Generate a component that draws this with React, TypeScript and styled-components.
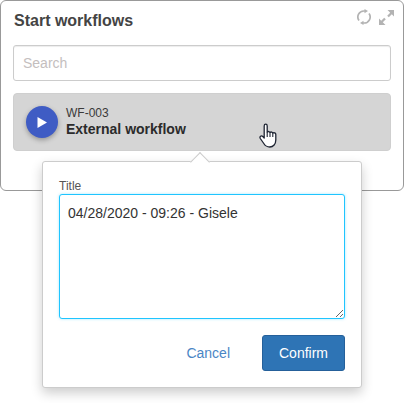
import React from "react";
import styled, { createGlobalStyle } from "styled-components";

const Global = createGlobalStyle`
  html, body { margin: 0; padding: 0; background: #fff; }
  body { font-family: "Liberation Sans", Arial, sans-serif; color: #333; }
  * { box-sizing: border-box; }
`;

const Page = styled.div`
  position: relative;
  width: 404px;
  height: 403px;
  overflow: hidden;
`;

const Card = styled.section`
  width: 404px;
  height: 191px;
  border: 1px solid #999;
  border-radius: 6px;
  padding: 10px 12px 0;
`;

const Header = styled.header`
  display: flex;
  align-items: center;
  justify-content: space-between;
  height: 20px;
  margin-bottom: 14px;
`;

const Title = styled.h2`
  margin: 0 0 0 1px;
  font-size: 16px;
  line-height: 20px;
  font-weight: 700;
  color: #444;
`;

const Tools = styled.div`
  display: flex;
  align-items: center;
  gap: 8px;
  margin: -8px -3px 0 0;
  color: #b3b3b3;
`;

const Search = styled.input`
  display: block;
  width: 378px;
  height: 36px;
  padding: 0 9px;
  border: 1px solid #ccc;
  border-radius: 3px;
  box-shadow: inset 0 1px 1px rgba(0, 0, 0, 0.075);
  font: 14px "Liberation Sans", Arial, sans-serif;
  outline: none;
  &::placeholder { color: #c4bebe; opacity: 1; }
`;

const Row = styled.div`
  display: flex;
  align-items: center;
  gap: 8px;
  width: 378px;
  height: 58px;
  margin-top: 12px;
  padding-left: 12px;
  background: #d5d5d5;
  border: 1px solid #cfcfcf;
  border-radius: 4px;
`;

const PlayButton = styled.span`
  display: flex;
  align-items: center;
  justify-content: center;
  width: 32px;
  height: 32px;
  flex: none;
  border-radius: 50%;
  background: #3f5cc4;
  box-shadow: 0 2px 5px rgba(0, 0, 0, 0.3);
`;

const RowText = styled.div`
  display: flex;
  flex-direction: column;
`;

const Code = styled.span`
  font-size: 12px;
  line-height: 15px;
  color: #3a3a3a;
`;

const Name = styled.span`
  font-size: 14px;
  line-height: 17px;
  font-weight: 700;
  color: #2b2b2b;
`;

const Cursor = styled.svg`
  position: absolute;
  left: 259px;
  top: 123px;
`;

const Popover = styled.div`
  position: absolute;
  left: 42px;
  top: 161px;
  width: 320px;
  height: 227px;
  padding: 17px 16px 0;
  background: #fff;
  border: 1px solid #ccc;
  border-radius: 3px;
  box-shadow: 0 5px 12px rgba(0, 0, 0, 0.2);
  &::before {
    content: "";
    position: absolute;
    left: 150px;
    top: -7px;
    width: 13px;
    height: 13px;
    background: #fff;
    border-left: 1px solid #ccc;
    border-top: 1px solid #ccc;
    transform: rotate(45deg);
  }
`;

const Label = styled.label`
  display: block;
  font-size: 12px;
  line-height: 14px;
  color: #555;
  margin-bottom: 1px;
`;

const TextArea = styled.textarea`
  display: block;
  width: 286px;
  height: 125px;
  padding: 10px 8px;
  border: 1px solid #1fc5ff;
  border-radius: 3px;
  box-shadow: 0 0 3px rgba(31, 197, 255, 0.4);
  font: 14px/17px "Liberation Sans", Arial, sans-serif;
  color: #333;
  outline: none;
`;

const Actions = styled.div`
  display: flex;
  align-items: center;
  justify-content: flex-end;
  gap: 32px;
  width: 286px;
  margin-top: 16px;
`;

const CancelLink = styled.a`
  font-size: 14px;
  color: #4a86c5;
  cursor: pointer;
`;

const ConfirmButton = styled.button`
  width: 83px;
  height: 36px;
  padding: 0;
  background: #2e74b5;
  border: 1px solid #25609a;
  border-radius: 3px;
  color: #fff;
  font: 14px "Liberation Sans", Arial, sans-serif;
`;

export default function App() {
  return (
    <Page>
      <Global />
      <Card>
        <Header>
          <Title>Start workflows</Title>
          <Tools>
            <svg width="14" height="16" viewBox="0 0 14 16" fill="none" stroke="currentColor" strokeWidth="1.7">
              <path d="M2 11.500A6 6 0 0 1 7 2h1" />
              <path d="M12 4.500A6 6 0 0 1 7 14H6" />
              <path d="M7.500 0l3.500 2-3.500 2.200z" fill="currentColor" stroke="none" />
              <path d="M6.500 11.800L3 14l3.500 2z" fill="currentColor" stroke="none" />
            </svg>
            <svg width="15" height="15" viewBox="0 0 15 15" fill="currentColor">
              <path d="M8.500 0H15v6.500l-2.200-2.200-3 3-1.600-1.600 3-3zM6.500 15H0V8.500l2.200 2.200 3-3 1.600 1.600-3 3z" />
            </svg>
          </Tools>
        </Header>
        <Search placeholder="Search" />
        <Row>
          <PlayButton>
            <svg width="10" height="11" viewBox="0 0 10 11"><path d="M0.500 0L10 5.500 0.500 11z" fill="#fff" /></svg>
          </PlayButton>
          <RowText>
            <Code>WF-003</Code>
            <Name>External workflow</Name>
          </RowText>
        </Row>
      </Card>
      <Cursor width="20" height="26" viewBox="0 0 20 26">
        <path
          d="M5.200 3c0-2.400 3-2.400 3 0v6c1-.8 2.400-.6 2.800.4 1-.7 2.400-.4 2.800.6 1.200-.6 3 0 3 1.500v5.500c0 4-2.500 7-6 7-3.200 0-4.500-1-6-3.500L1.300 15.500c-1.100-2 1-3.500 2.500-2l1.400 1.500z"
          fill="#fff"
          stroke="#1f2533"
          strokeWidth="1.300"
          strokeLinejoin="round"
        />
        <path d="M8.200 9v5M11 9.500V14M13.800 10v4" stroke="#1f2533" strokeWidth="1.100" fill="none" />
      </Cursor>
      <Popover>
        <Label>Title</Label>
        <TextArea defaultValue="04/28/2020 - 09:26 - Gisele" />
        <Actions>
          <CancelLink>Cancel</CancelLink>
          <ConfirmButton>Confirm</ConfirmButton>
        </Actions>
      </Popover>
    </Page>
  );
}
